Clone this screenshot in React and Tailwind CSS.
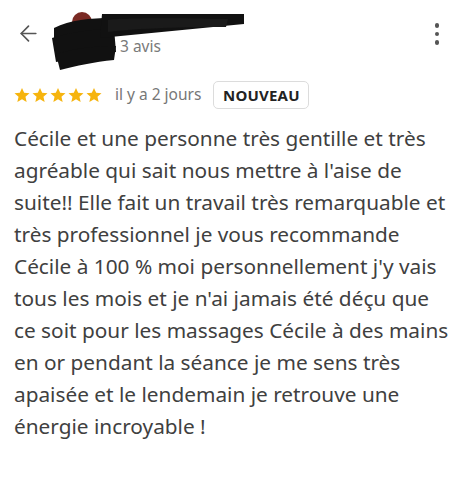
import React from "react";
import { ArrowLeft } from "lucide-react";

function Star() {
  return (
    <svg viewBox="0 0 24 24" className="h-[18px] w-[18px]" fill="#f6b40e">
      <path d="M12 2.5l2.9 6.6 7.1.6-5.4 4.7 1.6 7-6.2-3.8-6.2 3.8 1.6-7L2 9.7l7.1-.6z" />
    </svg>
  );
}

const lines = [
  "Cécile et une personne très gentille et très",
  "agréable qui sait nous mettre à l'aise de",
  "suite!! Elle fait un travail très remarquable et",
  "très professionnel je vous recommande",
  "Cécile à 100 % moi personnellement j'y vais",
  "tous les mois et je n'ai jamais été déçu que",
  "ce soit pour les massages Cécile à des mains",
  "en or pendant la séance je me sens très",
  "apaisée et le lendemain je retrouve une",
  "énergie incroyable !",
];

export default function App() {
  return (
    <div className="h-[477px] w-[461px] bg-white font-['Noto_Sans',sans-serif] text-[#3a3a3a]">
      <header className="flex h-[66px] items-start pt-[14px]">
        <div className="flex h-[38px] w-[50px] items-center pl-[16px] text-[#555]">
          <ArrowLeft className="h-[25px] w-[25px]" strokeWidth={1.6} />
        </div>
        <div className="relative flex-1">
          <div className="h-[22px]" />
          <div className="pl-[70px] text-[15.5px] leading-[20px] text-[#7a7a7a]">3 avis</div>
          {/* redaction scribble over avatar + name */}
          <svg className="absolute left-0 top-[-2px]" width="196" height="60" viewBox="0 0 196 60">
            <circle cx="32" cy="10" r="10" fill="#7a2a24" />
            <path d="M4 16 C20 8 40 6 62 6 L62 22 C40 24 22 28 4 34 Z" fill="#111" />
            <path d="M2 26 C20 20 40 18 64 16 L66 40 C48 42 28 46 6 50 Z" fill="#111" />
            <path d="M6 42 C26 36 46 34 66 34 L64 48 C44 50 26 54 10 58 Z" fill="#111" />
            <path d="M52 2 L194 2 L194 12 L50 26 Z" fill="#111" />
            <path d="M58 8 C70 6 120 6 178 7 L176 15 C120 15 80 17 58 20 Z" fill="#1a1a1a" />
          </svg>
        </div>
        <div className="flex w-[48px] flex-col items-center gap-[4px] pt-[9px]">
          <span className="h-[4.5px] w-[4.5px] rounded-full bg-[#555]" />
          <span className="h-[4.5px] w-[4.5px] rounded-full bg-[#555]" />
          <span className="h-[4.5px] w-[4.5px] rounded-full bg-[#555]" />
        </div>
      </header>

      <div className="flex items-center pl-[13px] pt-[15px]">
        <div className="flex">
          <Star />
          <Star />
          <Star />
          <Star />
          <Star />
        </div>
        <span className="ml-[12px] text-[15.5px] text-[#777]">il y a 2 jours</span>
        <span className="ml-[12px] flex h-[28px] w-[96px] items-center justify-center rounded-[5px] border border-[#dcdcdc] text-[15px] font-bold tracking-[0.2px] text-[#222]">
          NOUVEAU
        </span>
      </div>

      <p className="whitespace-nowrap px-[14px] pt-[13px] text-[20.8px] leading-[32px] text-[#404040]">
        {lines.map((l, i) => (
          <React.Fragment key={i}>
            {l}
            <br />
          </React.Fragment>
        ))}
      </p>
    </div>
  );
}
